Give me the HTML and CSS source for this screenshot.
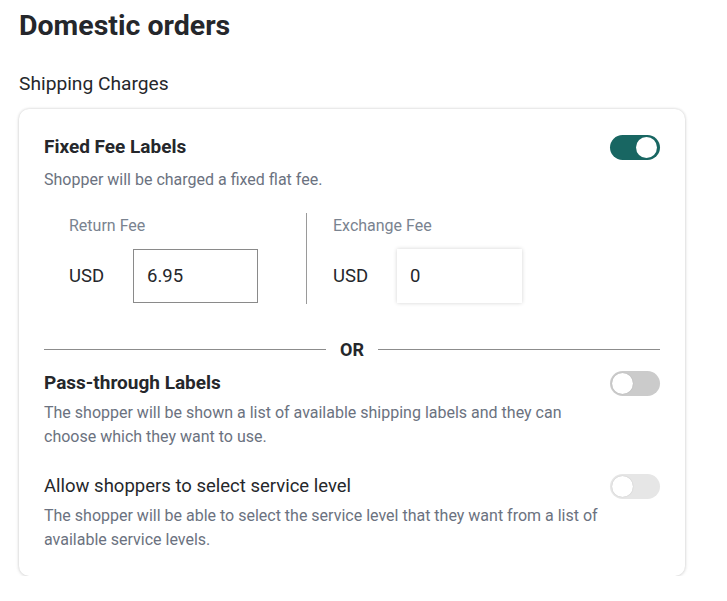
FILE: index.html
```html
<!DOCTYPE html>
<html>
<head>
<meta charset="utf-8">
<link rel="stylesheet" href="styles.css">
</head>
<body>
<h1 class="page-title">Domestic orders</h1>
<div class="section-label">Shipping Charges</div>
<div class="card">
  <div class="option">
    <div class="option-head">
      <div class="option-title bold">Fixed Fee Labels</div>
      <span class="toggle on"><span class="knob"></span></span>
    </div>
    <div class="option-desc top">Shopper will be charged a fixed flat fee.</div>
  </div>
  <div class="fees">
    <div class="fee-col">
      <div class="fee-label">Return Fee</div>
      <div class="fee-row">
        <span class="currency">USD</span>
        <div class="fee-input bordered">6.95</div>
      </div>
    </div>
    <div class="fee-divider"></div>
    <div class="fee-col second">
      <div class="fee-label">Exchange Fee</div>
      <div class="fee-row">
        <span class="currency">USD</span>
        <div class="fee-input shadowed">0</div>
      </div>
    </div>
  </div>
  <div class="or-row">
    <span class="or-line"></span>
    <span class="or-text">OR</span>
    <span class="or-line"></span>
  </div>
  <div class="option pass">
    <div class="option-head">
      <div class="option-title bold">Pass-through Labels</div>
      <span class="toggle off"><span class="knob"></span></span>
    </div>
    <div class="option-desc wide">The shopper will be shown a list of available shipping labels and they can choose which they want to use.</div>
  </div>
  <div class="option service">
    <div class="option-head">
      <div class="option-title">Allow shoppers to select service level</div>
      <span class="toggle off light"><span class="knob"></span></span>
    </div>
    <div class="option-desc wide">The shopper will be able to select the service level that they want from a list of available service levels.</div>
  </div>
</div>
</body>
</html>
```

FILE: styles.css
```css
* { box-sizing: border-box; }
body {
  margin: 0;
  padding: 0 42px 0 19px;
  font-family: Roboto, "Liberation Sans", Arial, sans-serif;
  color: #1f2328;
  background: #fff;
}
.page-title {
  margin: 8px 0 0;
  font-size: 28.5px;
  line-height: 36px;
  font-weight: 700;
  color: #25272b;
}
.section-label {
  margin-top: 28px;
  font-size: 19.2px;
  line-height: 24px;
  color: #25272b;
}
.card {
  margin-top: 13px;
  width: 666px;
  background: #fff;
  border-radius: 10px;
  box-shadow: 0 0 3px rgba(0,0,0,0.18), 0 1px 4px rgba(0,0,0,0.08);
  padding: 25px 25px 24px 25px;
}
.option-head {
  display: flex;
  justify-content: space-between;
  align-items: center;
  height: 26px;
}
.option-title {
  font-size: 18.5px;
  line-height: 24px;
  color: #25272b;
}
.option-title.bold { font-weight: 700; font-size: 19px; }
.option-desc {
  margin-top: 5px;
  font-size: 16px;
  line-height: 24px;
  color: #6b7280;
}
.option-desc.top { margin-top: 8px; }
.option-desc.wide { max-width: 560px; }
.toggle {
  position: relative;
  display: block;
  width: 50px;
  height: 25px;
  border-radius: 13px;
  flex: none;
}
.toggle .knob {
  position: absolute;
  top: 2px;
  width: 21px;
  height: 21px;
  border-radius: 50%;
  background: #fff;
}
.toggle.on { background: #186662; }
.toggle.on .knob { right: 3px; }
.toggle.off { background: #cbcbcb; }
.toggle.off.light { background: #e6e6e6; }
.toggle.off .knob { left: 2px; box-shadow: 0 0 1px rgba(0,0,0,0.25); }
.fees {
  display: flex;
  margin-top: 21px;
  padding-left: 25px;
}
.fee-col { width: 237px; padding-top: 3px; }
.fee-col.second { padding-left: 26px; }
.fee-divider {
  width: 1px;
  background: #9a9a9a;
  height: 91px;
}
.fee-label {
  font-size: 16px;
  line-height: 20px;
  color: #7a8390;
}
.fee-row {
  display: flex;
  align-items: center;
  margin-top: 13px;
}
.currency {
  width: 64px;
  font-size: 18.5px;
  color: #25272b;
}
.fee-input {
  width: 125px;
  height: 54px;
  display: flex;
  align-items: center;
  padding-left: 13px;
  font-size: 18.5px;
  color: #25272b;
  background: #fff;
}
.fee-input.bordered { border: 1px solid #8a8a8a; }
.fee-input.shadowed { box-shadow: 0 0 4px rgba(0,0,0,0.18); }
.or-row {
  display: flex;
  align-items: center;
  gap: 14px;
  margin-top: 33px;
  height: 24px;
}
.or-line { flex: 1; height: 1px; background: #8c8c8c; }
.or-text { font-size: 18px; font-weight: 700; color: #25272b; }
.pass { margin-top: 9px; }
.service { margin-top: 24px; }
```
